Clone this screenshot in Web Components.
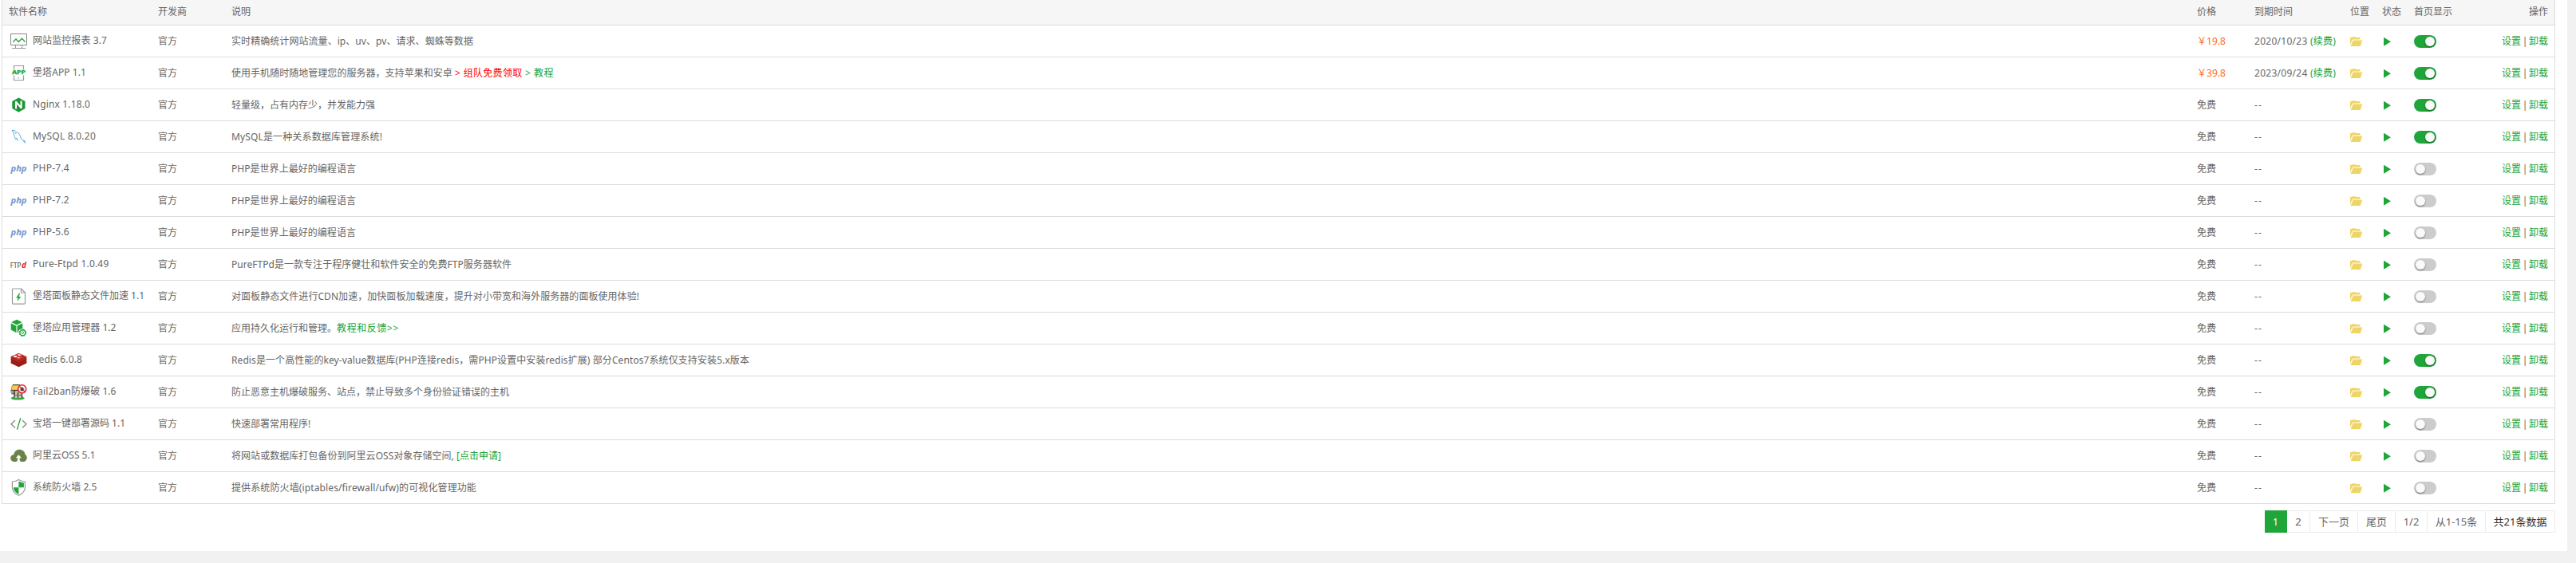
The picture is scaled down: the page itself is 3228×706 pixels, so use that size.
<!DOCTYPE html>
<html lang="zh-CN">
<head>
<meta charset="utf-8">
<title>软件商店</title>
<style>
  html, body{
    margin: 0;
    height: 100%;
    background: #f1f1f1;
  }
  body{
    font: 12px/17px "Noto Sans", "Noto Sans CJK SC", sans-serif;
    color: #666;
    overflow: hidden;
  }
</style>
</head>
<body>
<soft-panel></soft-panel>

<script>
const ICONS = {
  monitor: `<path d="M2.5 2.5h20v14h-20z" fill="none" stroke="#888"/>
    <path d="M8.5 17v3.500M16.500 17v3.500M4 20.500h17" fill="none" stroke="#999"/>
    <path d="M5.300 12.700L9 9l3.300 3.500 4.200-4.300 4 4.300" fill="none" stroke="#20a53a" stroke-width="1.300"/>`,
  app: `<path d="M6.500 7V2.500h12V7M6.500 14.500v6h12v-6" fill="none" stroke="#999" stroke-width="1.200"/>
    <circle cx="12.300" cy="17.700" r=".8" fill="#888"/>
    <text x="4" y="13" font-size="6.500" font-weight="700" fill="#20a53a" stroke="#20a53a" stroke-width=".3" textLength="17" lengthAdjust="spacingAndGlyphs">APP</text>`,
  nginx: `<path d="M12.400 2.500l8.100 4.600v9l-8.100 4.600-8.100-4.600v-9z" fill="#20963a"/>
    <path d="M9 15.700V7.800l6.600 7.400V7.300" fill="none" stroke="#fff" stroke-width="2.100" stroke-linejoin="round" stroke-linecap="round"/>`,
  mysql: `<g fill="none" stroke="#4ba9dc" stroke-width="1" stroke-linecap="round" stroke-linejoin="round">
      <path d="M4.300 3.500c2-.6 3.600.3 5 2 2.300.5 3.800 2 4.800 4.500.8 2.300 1.600 4.300 2.600 5.500 1.800.3 3 .9 3.800 1.900l-2-.1 2.400 2.100"/>
      <path d="M4.300 3.500l2 3.500c.2 2 .2 3.200 1.300 4.500.1 1.700.5 2.800 1.200 3.500l.7-2 2 3.300"/>
      <path d="M8.300 6.500l.6 1"/>
    </g>`,
  php: `<text x="2.500" y="15" font-size="10.500" font-weight="700" font-style="italic" fill="#7793cc" textLength="20" lengthAdjust="spacingAndGlyphs">php</text>`,
  ftp: `<text x="1.800" y="16" font-size="9.500" fill="#444" textLength="13.500" lengthAdjust="spacingAndGlyphs">FTP</text>
    <text x="16" y="16" font-size="10" font-weight="700" font-style="italic" fill="#e8242c" textLength="6" lengthAdjust="spacingAndGlyphs">d</text>`,
  file: `<path d="M5.700 2h9.800l5 5v13a1.200 1.200 0 0 1-1.200 1.200H5.700A1.200 1.200 0 0 1 4.500 20V3.200A1.200 1.200 0 0 1 5.700 2zM15.500 2v5h5" fill="none" stroke="#999" stroke-width="1.200"/>
    <path d="M12.700 8l-3.500 5.700h2.500l-1 4.300 4.600-6h-2.700l1.600-4z" fill="#20a53a"/>`,
  cube: `<path d="M10 .8l6.700 3.300L10 7.600 3.200 4.100z" fill="#20a53a"/>
    <path d="M2.700 5.300l6.700 3.500v8.400l-6.700-3.700zM17.300 5.300v7c-2.900-.3-5.100 1.500-5.500 4.300l-1.200.6V8.800z" fill="#20a53a"/>
    <circle cx="17.400" cy="17.200" r="3.500" fill="#fff" stroke="#20a53a" stroke-width="1.400"/>
    <circle cx="17.400" cy="17.200" r="4.400" fill="none" stroke="#20a53a" stroke-width="1" stroke-dasharray="1.700 1.750"/>
    <circle cx="17.400" cy="17.200" r="1.300" fill="none" stroke="#20a53a" stroke-width=".9"/>`,
  redis: `<path d="M2.700 7v8.500l9.700 4.800 9.900-4.800V7z" fill="#a51f1a"/>
    <path d="M12.400 2.800l9.900 4.200-9.900 4.400L2.700 7z" fill="#d13a32"/>
    <path d="M2.700 10.800l9.700 4.300 9.900-4.300M2.700 14.500l9.700 4.300 9.900-4.300" fill="none" stroke="#731511" stroke-width=".8"/>
    <path d="M2.700 9.300l9.700 4.300 9.900-4.300" fill="none" stroke="#cc3a32" stroke-width=".7"/>
    <path d="M11 4.100l2.500.5 1.300-.5-.6 1 1.300.6-2 .2-.5.9-.6-1z" fill="#fff"/>
    <ellipse cx="8.200" cy="6.900" rx="2.300" ry="1" fill="#fff"/><path d="M10.500 8.300l3.600-.4-1.900 1.700z" fill="#fff"/>
    <path d="M17 5.700l2.600 1.100L17 8z" fill="#7a120d"/>`,
  ban: `<ellipse cx="11.200" cy="19.300" rx="8.600" ry="2.300" fill="#3aa843"/>
    <path d="M6.500 9.500h10V19h-10z" fill="#c9c4b4"/>
    <path d="M7 9.500v9.300M11.500 12v7M16.500 12v7" fill="none" stroke="#3a322a" stroke-width="1.300"/>
    <path d="M7 15.500h9" stroke="#77705f" stroke-width="1"/>
    <path d="M4.500 3.200h9.500l-.7 6H3z" fill="#f3cf58" stroke="#a27a1c" stroke-width=".8"/>
    <path d="M2.300 9.700h10M2.300 11.800h5M3.300 13.800h4" stroke="#2b2925" stroke-width="1"/>
    <path d="M5 2.500h9" stroke="#56451f" stroke-width=".9"/>
    <circle cx="16.700" cy="7.800" r="5" fill="#fff" stroke="#e0262c" stroke-width="1.600"/>
    <ellipse cx="16.700" cy="8" rx="1.700" ry="2.500" fill="#222"/>
    <path d="M14.200 6.500l5 3M14.200 9.500l5-3M14 8h5.400" stroke="#333" stroke-width=".6"/>
    <path d="M13.300 4.500l6.700 6.700" stroke="#e0262c" stroke-width="1.200"/>`,
  code: `<path d="M8 7l-5 4.700 5 4.800M17 7l5 4.700-5 4.800" fill="none" stroke="#888" stroke-width="1.300"/>
    <path d="M14.800 4.200l-4.400 14.600" fill="none" stroke="#20a53a" stroke-width="1.300"/>`,
  cloud: `<path d="M7.300 19c-3 0-5.100-2-5.100-4.500 0-2.600 1.800-4.500 4.200-4.600C7 6 9.600 3.700 13.200 3.700c4 0 6.800 2.400 7.300 6 1.400.8 2.200 2.600 2.200 4.300 0 2.900-2 5-4.700 5H7.300z" fill="#6b834a"/>
    <path d="M12.400 10.200l3.600 4h-2.300v2.500c0 1.200.8 2.300 2.200 2.300l-.4.300H8.800c1.500-.4 2.300-1.600 2.300-3.200v-1.900H8.800z" fill="#fff"/>`,
  shield: `<path d="M12.400 1.500c2.300 1.500 5 2.300 8 2.500v7c0 4.500-3 8.200-8 10.300-5-2.100-8-5.800-8-10.300V4c3-.2 5.700-1 8-2.500z" fill="#fff" stroke="#999" stroke-width="1.200"/>
    <path d="M12.400 3.500c2 1.100 4.200 1.800 6.500 2v5.700h-6.500zM12.400 11.200v8.500c-4-1.800-6.400-4.700-6.500-8.500z" fill="#20a53a"/>`
};

class SoftIcon extends HTMLElement{
  constructor( ){
    super( );
    this.attachShadow( { mode: 'open' } );
  }

  connectedCallback( ){
    this.shadowRoot.innerHTML = `
      <style>
        :host{ display: block; flex: none; width: 24px; height: 23px; }
        svg{ display: block; overflow: visible; font-family: "Noto Sans", sans-serif; }
      </style>
      <svg width="24" height="23" viewBox="0 0 24 23">${ ICONS[this.getAttribute('name')] }</svg>
    `;
  }
}

// one line of text, letter-spaced so that it takes up the given width
class FitText extends HTMLElement{
  constructor( ){
    super( );
    this.attachShadow( { mode: 'open' } );
  }

  connectedCallback( ){
    // no whitespace around the slot: white-space: pre would draw it
    this.shadowRoot.innerHTML = '<style>:host{ display: inline-block; white-space: pre; }</style><slot></slot>';
    const width = parseFloat(this.getAttribute('width'));
    if(width){
      const count = this.textContent.length;
      const natural = this.getBoundingClientRect().width;
      this.style.letterSpacing = `${ (width - natural) / count }px`;
    }
  }
}

class ToggleSwitch extends HTMLElement{
  constructor( ){
    super( );
    this.attachShadow( { mode: 'open' } );
    this.shadowRoot.innerHTML = `
      <style>
        :host{
          display: flex;
          align-items: center;
          box-sizing: border-box;
          width: 28px;
          height: 16px;
          padding: 0 2px;
          border-radius: 8px;
          background: #ccc;
        }
        :host([on]){
          justify-content: flex-end;
          background: #20a53a;
        }
        i{
          width: 12px;
          height: 12px;
          border-radius: 50%;
          background: #fafafa;
          box-shadow: 0 1px 2px rgba(0, 0, 0, .45);
        }
      </style>
      <i></i>
    `;
  }
}

const COLUMNS = '187px 92px 1fr 72px 120px 40px 40px 84px 100px';

class SoftHead extends HTMLElement{
  constructor( ){
    super( );
    this.attachShadow( { mode: 'open' } );
    this.shadowRoot.innerHTML = `
      <style>
        :host{
          display: grid;
          grid-template-columns: ${ COLUMNS };
          align-items: center;
          height: 31px;
          background: #f6f6f6;
          border-bottom: 1px solid #ddd;
        }
        span{ padding: 0 8px 2px; }
        span:last-child{ text-align: right; }
      </style>
      <span>软件名称</span><span>开发商</span><span>说明</span><span>价格</span><span>到期时间</span>
      <span>位置</span><span>状态</span><span>首页显示</span><span>操作</span>
    `;
  }
}

class SoftRow extends HTMLElement{
  constructor( ){
    super( );
    this.attachShadow( { mode: 'open' } );
  }

  connectedCallback( ){
    const a = n => this.getAttribute(n);
    const price = a('price') ? `<fit-text class="price" width="36">￥${ a('price') }</fit-text>` : '免费';
    const date = a('date') ? `<fit-text width="70">${ a('date') } </fit-text><a><fit-text width="32">(续费)</fit-text></a>` : '<fit-text width="10">--</fit-text>';
    this.shadowRoot.innerHTML = `
      <style>
        :host{
          display: grid;
          grid-template-columns: ${ COLUMNS };
          align-items: center;
          height: 39px;
          border-bottom: 1px solid #ddd;
        }
        div{ padding: 0 8px; white-space: nowrap; display: flex; align-items: center; }
        svg{ display: block; }
        a{ color: #20a53a; }
        .name{ gap: 6px; }
        .name fit-text{ margin-bottom: 2px; }
        .price{ color: #ff6a22; }
        .ops{ justify-content: flex-end; }
        .ops i{ font-style: normal; width: 10px; text-align: center; }
      </style>
      <div class="name"><soft-icon name="${ a('icon') }"></soft-icon><fit-text width="${ a('width') }">${ a('name') }</fit-text></div>
      <div>官方</div>
      <div><slot></slot></div>
      <div>${ price }</div>
      <div>${ date }</div>
      <div>
        <svg width="16" height="12" viewBox="0 0 16 12">
          <path d="M0 10V1.500Q0 1 .5 1H2l1-.700h3.500l1 .700H12q.5 0 .5.500V3.500H4Q3 3.500 2.600 4.500z" fill="#efd565"/>
          <path d="M3.700 4.500h11.500L12.800 12H.5z" fill="#efd565"/>
        </svg>
      </div>
      <div><svg width="12" height="12" viewBox="0 0 12 12"><path d="M2 .700l9 5.500-9 5.500z" fill="#20a53a"/></svg></div>
      <div><toggle-switch ${ this.hasAttribute('on') ? 'on' : '' }></toggle-switch></div>
      <div class="ops"><a>设置</a><i>|</i><a>卸载</a></div>
    `;
  }
}

class PageNav extends HTMLElement{
  constructor( ){
    super( );
    this.attachShadow( { mode: 'open' } );
    this.shadowRoot.innerHTML = `
      <style>
        :host{
          display: flex;
          justify-content: flex-end;
          margin-top: 8px;
          font-size: 13px;
          line-height: 26px;
          text-align: center;
        }
        span{
          box-sizing: border-box;
          height: 28px;
          border: 1px solid #ececec;
          border-left: 0;
          white-space: nowrap;
        }
        .now{ background: #20a53a; border-color: #20a53a; color: #fff; }
        .total{ color: #333; }
      </style>
      <span class="now" style="width: 28px">1</span>
      <span style="width: 29px">2</span>
      <span style="width: 60px">下一页</span>
      <span style="width: 47px">尾页</span>
      <span style="width: 40px">1/2</span>
      <span style="width: 73px">从1-15条</span>
      <span class="total" style="width: 87px">共21条数据</span>
    `;
  }
}

class SoftPanel extends HTMLElement{
  constructor( ){
    super( );
    this.attachShadow( { mode: 'open' } );
  }

  connectedCallback( ){
    this.shadowRoot.innerHTML = `
      <style>
        :host{
          display: block;
          box-sizing: border-box;
          width: 3217px;
          height: 691px;
          padding: 0 15px 0 2px;
          background: #fff;
        }
        .table{ border: 1px solid #ddd; border-width: 0 1px; }
        a{ color: #20a53a; }
        a.hot{ color: #f00; }
      </style>
      <div class="table">
        <soft-head></soft-head>
        <soft-row icon="monitor" name="网站监控报表 3.7" width="93" price="19.8" date="2020/10/23" on><fit-text width="303">实时精确统计网站流量、ip、uv、pv、请求、蜘蛛等数据</fit-text></soft-row>
        <soft-row icon="app" name="堡塔APP 1.1" width="67" price="39.8" date="2023/09/24" on><fit-text width="280">使用手机随时随地管理您的服务器，支持苹果和安卓 </fit-text><a class="hot"><fit-text width="88">&gt; 组队免费领取 </fit-text></a><a><fit-text width="36">&gt; 教程</fit-text></a></soft-row>
        <soft-row icon="nginx" name="Nginx 1.18.0" width="72" on><fit-text>轻量级，占有内存少，并发能力强</fit-text></soft-row>
        <soft-row icon="mysql" name="MySQL 8.0.20" width="79" on><fit-text width="189">MySQL是一种关系数据库管理系统!</fit-text></soft-row>
        <soft-row icon="php" name="PHP-7.4" width="46"><fit-text width="156">PHP是世界上最好的编程语言</fit-text></soft-row>
        <soft-row icon="php" name="PHP-7.2" width="46"><fit-text width="156">PHP是世界上最好的编程语言</fit-text></soft-row>
        <soft-row icon="php" name="PHP-5.6" width="46"><fit-text width="156">PHP是世界上最好的编程语言</fit-text></soft-row>
        <soft-row icon="ftp" name="Pure-Ftpd 1.0.49" width="95.5"><fit-text width="351">PureFTPd是一款专注于程序健壮和软件安全的免费FTP服务器软件</fit-text></soft-row>
        <soft-row icon="file" name="堡塔面板静态文件加速 1.1" width="140"><fit-text width="511">对面板静态文件进行CDN加速，加快面板加载速度，提升对小带宽和海外服务器的面板使用体验!</fit-text></soft-row>
        <soft-row icon="cube" name="堡塔应用管理器 1.2" width="104.5"><fit-text>应用持久化运行和管理。</fit-text><a><fit-text width="78">教程和反馈&gt;&gt;</fit-text></a></soft-row>
        <soft-row icon="redis" name="Redis 6.0.8" width="62" on><fit-text width="649">Redis是一个高性能的key-value数据库(PHP连接redis，需PHP设置中安装redis扩展) 部分Centos7系统仅支持安装5.x版本</fit-text></soft-row>
        <soft-row icon="ban" name="Fail2ban防爆破 1.6" width="104.5" on><fit-text>防止恶意主机爆破服务、站点，禁止导致多个身份验证错误的主机</fit-text></soft-row>
        <soft-row icon="code" name="宝塔一键部署源码 1.1" width="116"><fit-text>快速部署常用程序!</fit-text></soft-row>
        <soft-row icon="cloud" name="阿里云OSS 5.1" width="78.5"><fit-text width="282">将网站或数据库打包备份到阿里云OSS对象存储空间, </fit-text><a><fit-text width="56">[点击申请]</fit-text></a></soft-row>
        <soft-row icon="shield" name="系统防火墙 2.5" width="80.5"><fit-text width="307">提供系统防火墙(iptables/firewall/ufw)的可视化管理功能</fit-text></soft-row>
      </div>
      <page-nav></page-nav>
    `;
  }
}

customElements.define('soft-icon', SoftIcon );
customElements.define('fit-text', FitText );
customElements.define('toggle-switch', ToggleSwitch );
customElements.define('soft-head', SoftHead );
customElements.define('soft-row', SoftRow );
customElements.define('page-nav', PageNav );
customElements.define('soft-panel', SoftPanel );
</script>
</body>
</html>
